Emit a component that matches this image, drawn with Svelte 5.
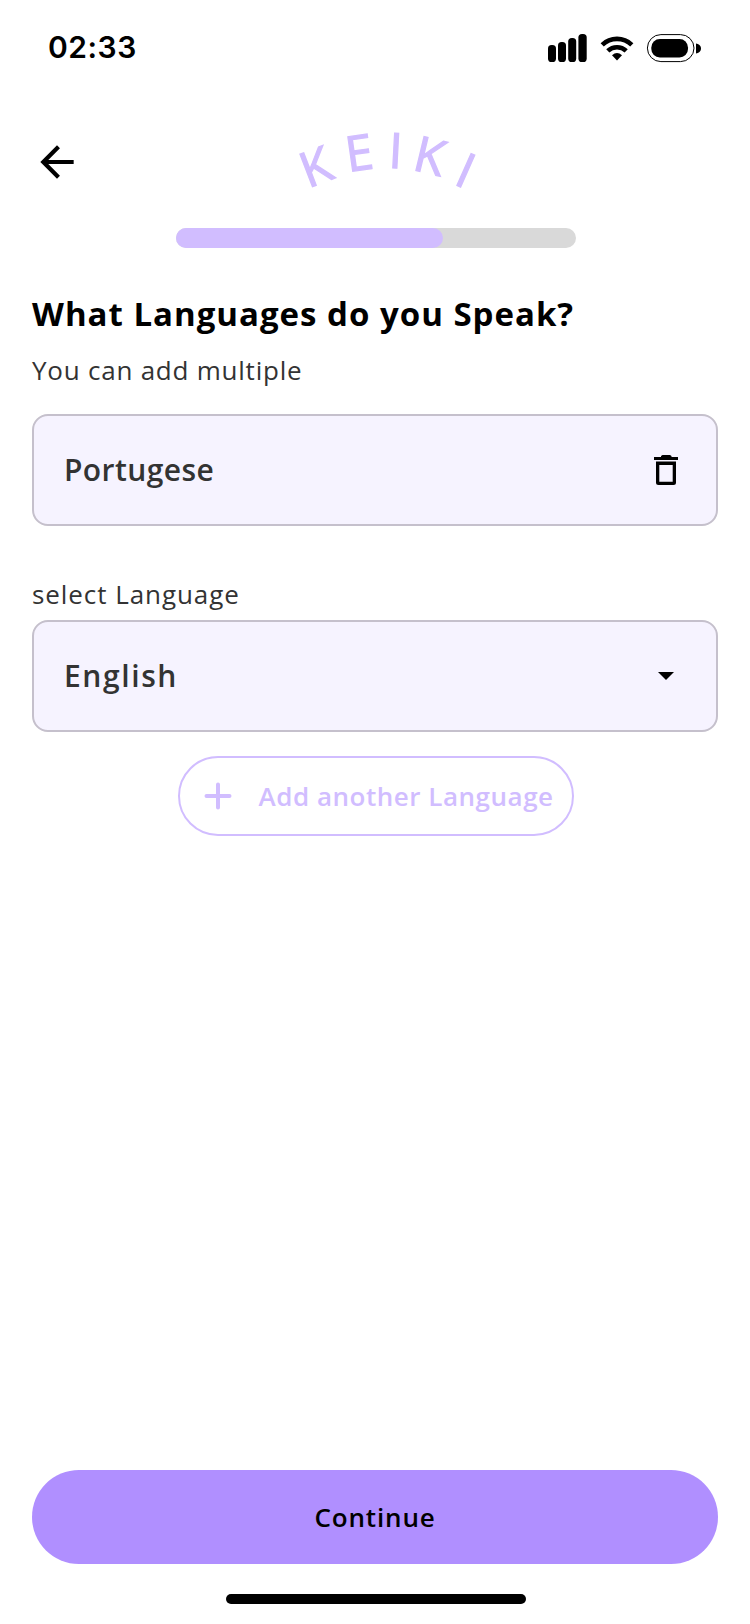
<script>
  const progress = 267 / 400;
  const logo = [
    { letter: 'K', x: 312, y: 187.5, turn: -21 },
    { letter: 'E', x: 352.3, y: 172, turn: -8 },
    { letter: 'I', x: 392.2, y: 168.4, turn: 3 },
    { letter: 'K', x: 415.2, y: 170.9, turn: 13.5 },
    { letter: 'I', x: 456, y: 185.6, turn: 24 }
  ];
</script>

<div class="screen">
  <header class="status">
    <span class="time">02:33</span>
    <svg class="indicators" width="156" height="30" viewBox="547 33 156 30">
      <rect x="548" y="45" width="8" height="17" rx="3.6" />
      <rect x="558" y="42" width="8" height="20" rx="3.6" />
      <rect x="568.2" y="38" width="8" height="24" rx="3.6" />
      <rect x="578.4" y="34" width="8.3" height="28" rx="3.6" />
      <g fill="none" stroke="#000" stroke-width="4.6">
        <path d="M602.2 44.8a21.4 21.4 0 0 1 29.6 0" />
        <path d="M607.8 50.9a13.4 13.4 0 0 1 18.4 0" />
      </g>
      <path d="M612 55.2q5-4.200 10 0l-5 5.200z" />
      <rect x="647.4" y="34.6" width="46.6" height="27" rx="13.5" fill="none" stroke="#000" stroke-width="1" />
      <rect x="651.3" y="39" width="36.7" height="18.500" rx="8.500" />
      <path d="M696 43.500c2.500.4 5 2.200 5 5s-2.500 4.600-5 5z" />
    </svg>
  </header>

  <nav class="top">
    <button class="back" aria-label="Back">
      <svg width="50" height="50" viewBox="0 0 24 24">
        <path d="M20 11H7.830l5.590-5.590L12 4l-8 8 8 8 1.410-1.410L7.830 13H20v-2z" />
      </svg>
    </button>
    <svg class="logo" width="180" height="62" viewBox="297 130 180 62">
      {#each logo as { letter, x, y, turn }}
        <text x="-4.200" y="-0.500" transform="translate({x} {y}) rotate({turn})">{letter}</text>
      {/each}
    </svg>
  </nav>

  <div class="track"><div class="fill" style="width: {progress * 100}%"></div></div>

  <main>
    <h1>What Languages do you Speak?</h1>
    <p class="hint">You can add multiple</p>
    <div class="field">
      <span class="chosen">Portugese</span>
      <svg width="24" height="30" viewBox="654 455 24 30">
        <path d="M661 457V456l1.500-1H670l1.500 1v1H678v3H654v-3z" />
        <path fill-rule="evenodd" d="M656 461.500H676V482.500Q676 485 673.500 485H658.500Q656 485 656 482.500zM659.300 465V481.700H672.700V465z" />
      </svg>
    </div>
    <p class="label">select Language</p>
    <div class="field">
      <span class="language">English</span>
      <svg class="caret" width="16" height="9" viewBox="0 0 16 9"><path d="M0 0h16L8 8z" /></svg>
    </div>
    <button class="add">
      <svg width="28" height="28" viewBox="0 0 28 28">
        <path d="M14 2.500v23M2.500 14h23" fill="none" stroke="#d1bdff" stroke-width="4" stroke-linecap="round" />
      </svg>
      <span>Add another Language</span>
    </button>
  </main>

  <button class="continue"><span>Continue</span></button>
  <div class="home"></div>
</div>

<style>
  :global(body) {
    background: #fff;
  }
  .screen {
    display: flex;
    flex-direction: column;
    box-sizing: border-box;
    width: 750px;
    height: 1624px;
    padding-bottom: 20px;
    background: #fff;
    color: #000;
    font-family: "Open Sans", sans-serif;
  }
  button {
    margin: 0;
    padding: 0;
    border: 0;
    background: none;
    font: inherit;
    color: inherit;
  }
  svg {
    display: block;
    flex: none;
  }
  .status {
    display: flex;
    justify-content: space-between;
    padding: 28px 47px 0 48px;
    height: 40px;
  }
  .time {
    font: 600 30px/39px Inter, sans-serif;
    letter-spacing: 0.5px;
  }
  .indicators {
    margin-top: 5px;
  }
  .top {
    display: flex;
    align-items: flex-start;
    box-sizing: border-box;
    height: 160px;
    padding: 62px 0 0 32px;
  }
  .back {
    margin-top: 7px;
  }
  .logo {
    margin-left: 215px;
    overflow: visible;
  }
  .logo text {
    font-size: 49px;
    font-weight: 500;
    fill: #d1bdff;
    stroke: #d1bdff;
    stroke-width: 1.200px;
  }
  .track {
    width: 400px;
    height: 20px;
    margin-left: 176px;
    border-radius: 10px;
    background: #d9d9d9;
  }
  .fill {
    height: 20px;
    border-radius: 10px;
    background: #d1bdff;
  }
  main {
    display: flex;
    flex-direction: column;
    padding: 0 32px;
  }
  h1 {
    margin: 46px 0 0;
    font-size: 33px;
    line-height: 40px;
    font-weight: 700;
    letter-spacing: 1px;
    white-space: nowrap;
  }
  p {
    margin: 0;
    color: #333;
    font-size: 26px;
    line-height: 34px;
  }
  .hint {
    margin: 19px 0 27px;
    letter-spacing: 0.770px;
  }
  .label {
    margin: 51px 0 9px;
    letter-spacing: 0.930px;
  }
  .field {
    display: flex;
    align-items: center;
    justify-content: space-between;
    box-sizing: border-box;
    height: 112px;
    padding: 0 38px 0 30px;
    border: 2px solid #c5c0cc;
    border-radius: 16px;
    background: #f6f3ff;
    color: #333;
    font-size: 30px;
    font-weight: 600;
    line-height: 40px;
  }
  .chosen {
    letter-spacing: 0.430px;
  }
  .language {
    letter-spacing: 1.600px;
  }
  .caret {
    margin-right: 4px;
  }
  .add {
    display: flex;
    align-items: center;
    align-self: center;
    box-sizing: border-box;
    width: 396px;
    height: 80px;
    margin: 24px 0 0 2px;
    padding-left: 24.500px;
    gap: 26px;
    border: 2px solid #d1bdff;
    border-radius: 40px;
    color: #d1bdff;
    font-size: 26px;
    line-height: 36px;
    font-weight: 600;
    letter-spacing: 0.520px;
    white-space: nowrap;
  }
  .add svg {
    margin: 0 1px 0 -1px;
  }
  .continue {
    height: 94px;
    margin: auto 32px 30px;
    border-radius: 47px;
    background: #b08fff;
    font-size: 26px;
    line-height: 36px;
    font-weight: 550;
    letter-spacing: 0.850px;
  }
  .home {
    width: 300px;
    height: 10px;
    margin-left: 226px;
    border-radius: 5px;
    background: #000;
  }
</style>
